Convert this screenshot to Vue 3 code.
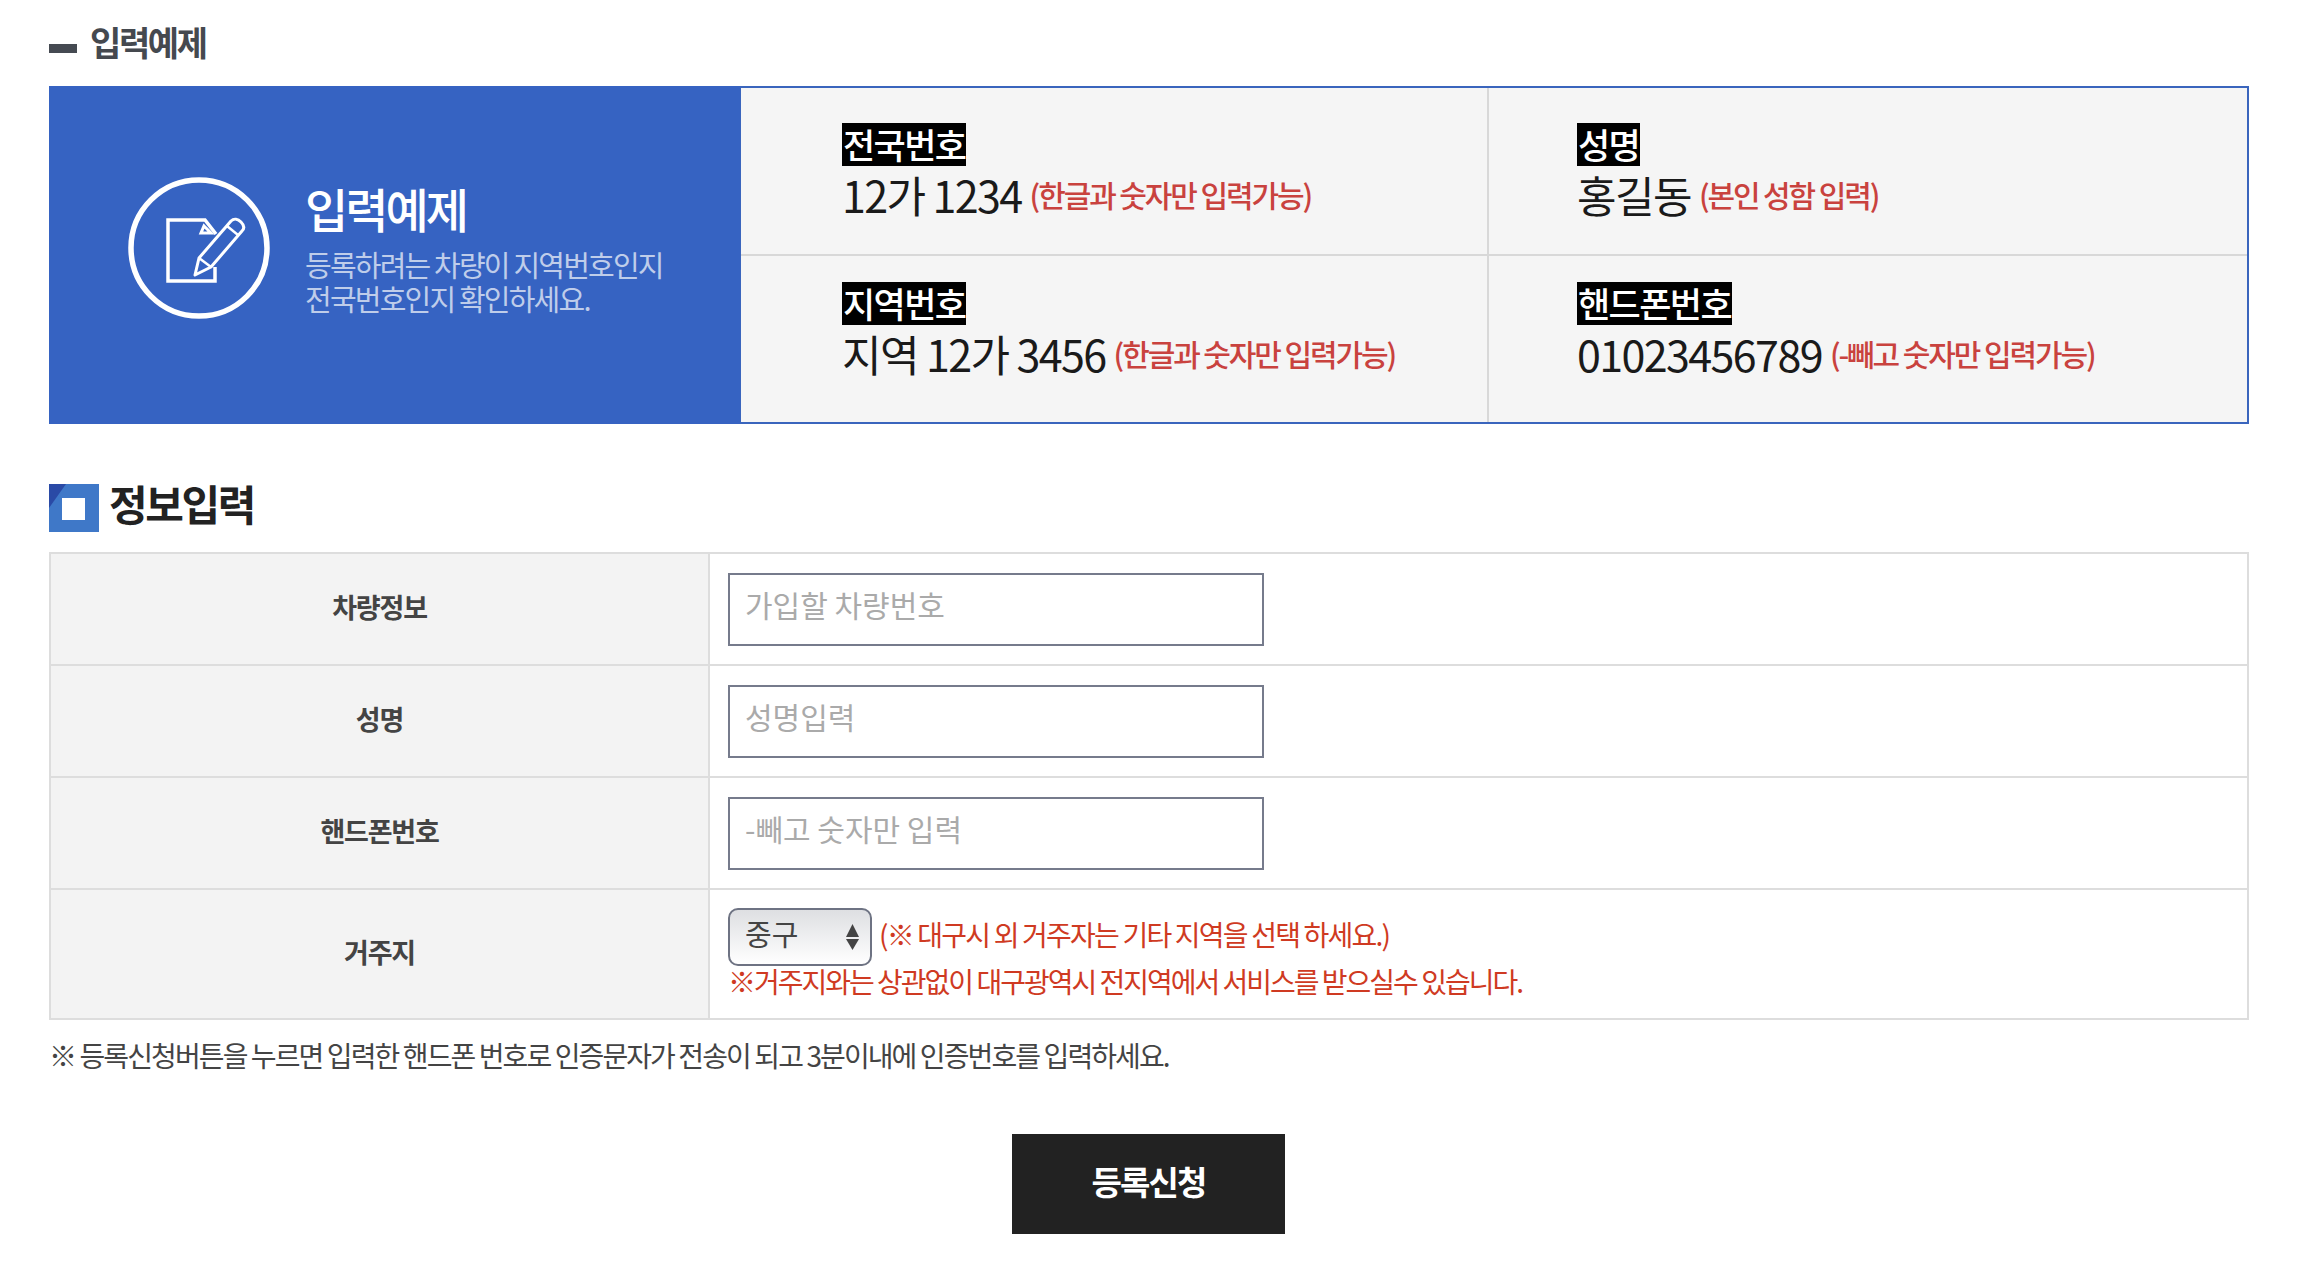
<template>
  <div class="page">
    <h3 class="sub-title"><span class="dash"></span>입력예제</h3>

    <div class="example">
      <div class="example-side">
        <svg class="edit-icon" width="144" height="144" viewBox="0 0 144 144" fill="none" stroke="#fff">
          <circle cx="72" cy="72" r="68" stroke-width="5.5" />
          <!-- note page with folded corner -->
          <path d="M88 91 V105 H41 V44 H78 L89 58" stroke-width="3.5" />
          <path d="M77 50 L84 57 H74 Z" stroke-width="3" />
          <!-- pencil -->
          <path d="M72 82 L104 45 C107 42 111 43 114 46 C117 49 118 52 115 55 L84 91 L68 99 Z" stroke-width="3" stroke-linejoin="round" />
          <path d="M72 82 L84 91" stroke-width="2.5" />
          <path d="M100 50 L111 59" stroke-width="2.5" />
        </svg>
        <div class="side-text">
          <strong>입력예제</strong>
          <p>등록하려는 차량이 지역번호인지<br />전국번호인지 확인하세요.</p>
        </div>
      </div>
      <div class="example-grid">
        <div v-for="item in examples" :key="item.tag" class="example-cell">
          <span class="tag">{{ item.tag }}</span>
          <div class="sample">
            <span class="value">{{ item.value }}</span>
            <span class="hint">{{ item.hint }}</span>
          </div>
        </div>
      </div>
    </div>

    <h2 class="form-title">
      <svg width="50" height="48" viewBox="0 0 50 48">
        <rect width="50" height="48" fill="#3f78c8" />
        <path d="M0 0 H17 L0 24 Z" fill="#2a4aa6" />
        <rect x="13" y="14" width="23" height="22" fill="#fff" />
      </svg>
      <span>정보입력</span>
    </h2>

    <table class="form-table">
      <colgroup>
        <col class="label-col" />
        <col />
      </colgroup>
      <tbody>
        <tr v-for="row in inputs" :key="row.label">
          <th><span>{{ row.label }}</span></th>
          <td><input type="text" :placeholder="row.placeholder" /></td>
        </tr>
        <tr class="area-row">
          <th><span>거주지</span></th>
          <td>
            <div class="area-line">
              <div class="select-wrap">
                <select>
                  <option>중구</option>
                </select>
                <svg width="13" height="26" viewBox="0 0 13 26" fill="#444">
                  <path d="M6.5 0 L13 13 H0 Z" />
                  <path d="M6.5 26 L13 15 H0 Z" />
                </svg>
              </div>
              <span class="red">(※ 대구시 외 거주자는 기타 지역을 선택 하세요.)</span>
            </div>
            <p class="red area-note">※거주지와는 상관없이 대구광역시 전지역에서 서비스를 받으실수 있습니다.</p>
          </td>
        </tr>
      </tbody>
    </table>

    <p class="notice">※ 등록신청버튼을 누르면 입력한 핸드폰 번호로 인증문자가 전송이 되고 3분이내에 인증번호를 입력하세요.</p>

    <div class="actions">
      <button type="button">등록신청</button>
    </div>
  </div>
</template>

<script setup>
const examples = [
  { tag: '전국번호', value: '12가 1234', hint: '(한글과 숫자만 입력가능)' },
  { tag: '성명', value: '홍길동', hint: '(본인 성함 입력)' },
  { tag: '지역번호', value: '지역 12가 3456', hint: '(한글과 숫자만 입력가능)' },
  { tag: '핸드폰번호', value: '01023456789', hint: '(-빼고 숫자만 입력가능)' }
]

const inputs = [
  { label: '차량정보', placeholder: '가입할 차량번호' },
  { label: '성명', placeholder: '성명입력' },
  { label: '핸드폰번호', placeholder: '-빼고 숫자만 입력' }
]
</script>

<style scoped>
.page {
  box-sizing: border-box;
  width: 2324px;
  height: 1268px;
  padding: 20px 75px 0 49px;
  overflow: hidden;
  background: #fff;
  font-family: "Noto Sans CJK KR", "Noto Sans", sans-serif;
}

.sub-title {
  display: flex;
  align-items: center;
  box-sizing: border-box;
  height: 44px;
  margin: 0 0 22px;
  padding-bottom: 2px;
  font-size: 34px;
  font-weight: 700;
  letter-spacing: -2.4px;
  color: #45494f;
}

.dash {
  width: 28px;
  height: 9px;
  margin: 15px 13px 0 0;
  background: #454a52;
}

.example {
  display: flex;
  height: 338px;
}

.example-side {
  display: flex;
  align-items: center;
  box-sizing: border-box;
  width: 691px;
  padding: 0 0 14px 78px;
  background: #3663c2;
}

.edit-icon {
  flex: none;
  margin-right: 34px;
}

.side-text strong {
  display: block;
  margin-bottom: 12px;
  font-size: 47px;
  line-height: 54px;
  font-weight: 500;
  letter-spacing: -3px;
  color: #fff;
}

.side-text p {
  margin: 0;
  font-size: 29px;
  line-height: 34px;
  letter-spacing: -1.8px;
  color: #bfcdea;
}

.example-grid {
  flex: 1;
  display: grid;
  grid-template-columns: 748px 1fr;
  grid-template-rows: 166px 1fr;
  box-sizing: border-box;
  border: 2px solid #3a65bd;
  border-left-width: 1px;
  background: #f5f5f5;
}

.example-cell {
  box-sizing: border-box;
  padding: 35px 0 0 101px;
}

.example-cell:nth-child(odd) {
  border-right: 2px solid #d8d8d8;
}

.example-cell:nth-child(n + 3) {
  padding-top: 26px;
  border-top: 2px solid #d8d8d8;
}

.example-cell:nth-child(even) {
  padding-left: 88px;
}

.tag {
  display: block;
  width: fit-content;
  height: 43px;
  padding: 0 1px;
  font-size: 35px;
  font-weight: 500;
  line-height: 42px;
  letter-spacing: -1.6px;
  color: #fff;
  background: #000;
}

.sample {
  display: flex;
  align-items: center;
  margin-top: 3px;
  line-height: 50px;
  white-space: nowrap;
}

.value {
  font-size: 43px;
  letter-spacing: -1.6px;
  color: #1a1a1a;
}

.hint {
  margin-left: 8px;
  font-size: 30px;
  font-weight: 500;
  letter-spacing: -2.1px;
  color: #c9423e;
}

.form-title {
  display: flex;
  align-items: center;
  gap: 10px;
  height: 48px;
  margin: 60px 0 20px;
  font-size: 42px;
  font-weight: 700;
  letter-spacing: -2.4px;
  color: #222;
}

.form-title svg {
  flex: none;
}

.form-title span {
  margin-bottom: 12px;
}

.form-table {
  width: 100%;
  table-layout: fixed;
  border-collapse: collapse;
  border: 2px solid #ddd;
}

.label-col {
  width: 659px;
}

.form-table th,
.form-table td {
  height: 110px;
  padding: 0;
  border: 2px solid #ddd;
}

.form-table th {
  font-size: 27px;
  font-weight: 700;
  letter-spacing: -1.2px;
  color: #444;
  background: #f3f3f3;
}

.form-table th span {
  display: block;
  margin-bottom: 6px;
}

.form-table td {
  padding-left: 18px;
}

.form-table input {
  display: block;
  box-sizing: border-box;
  width: 536px;
  height: 73px;
  padding: 0 15px 10px;
  border: 2px solid #767b8c;
  outline: none;
  font-family: inherit;
  font-size: 30px;
  letter-spacing: 0;
}

.form-table input::placeholder {
  color: #aaa;
}

.form-table .area-row td {
  height: 128px;
}

.area-line {
  display: flex;
  align-items: center;
}

.select-wrap {
  position: relative;
  width: 144px;
  height: 58px;
  margin: 6px 7px 0 0;
}

.select-wrap select {
  box-sizing: border-box;
  width: 100%;
  height: 100%;
  padding: 0 0 8px 15px;
  border: 2px solid #6e7383;
  border-radius: 10px;
  appearance: none;
  background: linear-gradient(#dedfe2, #fff);
  font-family: inherit;
  font-size: 29px;
  color: #444;
}

.select-wrap svg {
  position: absolute;
  top: 16px;
  right: 13px;
  pointer-events: none;
}

.red {
  font-size: 28px;
  letter-spacing: -1.8px;
  color: #cf3a22;
  white-space: nowrap;
}

.area-note {
  margin: -3px 0 0;
  line-height: 36px;
  padding-bottom: 7px;
  letter-spacing: -2px;
}

.notice {
  margin: 15px 0 0;
  font-size: 28px;
  line-height: 40px;
  letter-spacing: -1.9px;
  color: #444;
}

.actions {
  display: flex;
  justify-content: center;
  margin-top: 59px;
}

.actions button {
  width: 273px;
  height: 100px;
  margin-right: 1px;
  padding: 0 0 6px;
  border: 0;
  background: #222;
  font-family: inherit;
  font-size: 33px;
  font-weight: 700;
  letter-spacing: -1.8px;
  color: #fff;
}
</style>
